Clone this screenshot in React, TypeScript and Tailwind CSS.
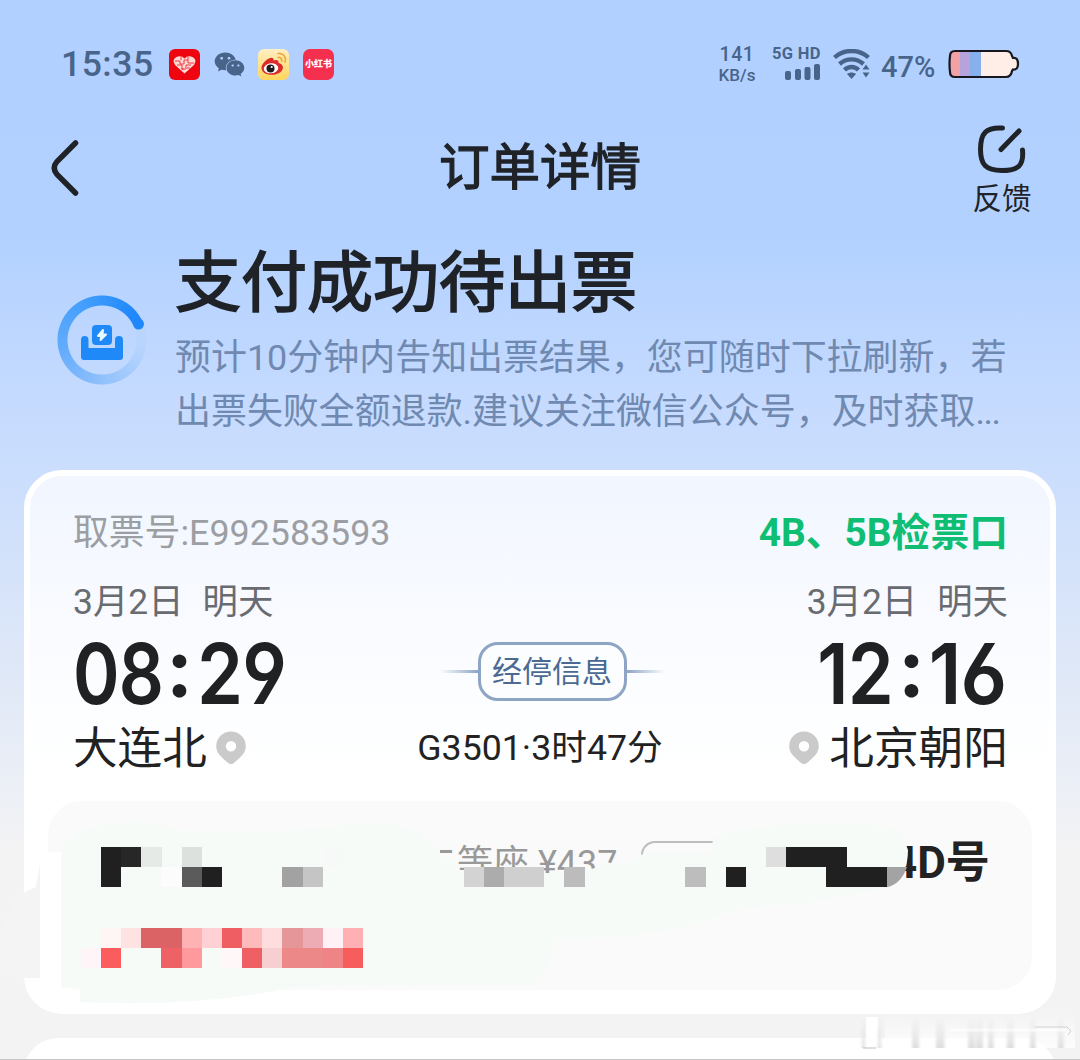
import React from "react";
import { FaWeixin } from "react-icons/fa";

const CJK = "font-['Roboto','Noto_Sans_CJK_SC',sans-serif]";

function StatusBar() {
  return (
    <div className="flex h-[110px] shrink-0 items-start text-[#49648a]">
      <div className="ml-[61px] mt-[44px] h-10 w-[108px] text-[35.5px] font-medium leading-10 tracking-[0.5px]">15:35</div>
      <svg className="mt-[49px]" width="31" height="31" viewBox="0 0 31 31">
        <rect width="31" height="31" rx="6" fill="#ee0510" />
        <path d="M15.5 24.5 L6 16 Q2.500 10.500 7.500 8 Q12 6 15.500 9.500 Q19 6 23.500 8 Q28.500 10.500 25 16 Z" fill="#ffd9d7" />
        <path d="M6 12h5v3h4v-4h4v3h6M8 16h5v4h4v-4h5M12 8v3M19 8v3M12 20h3M18 19h3" stroke="#ee3a3e" strokeWidth="1" fill="none" />
      </svg>
      <FaWeixin className="ml-[14px] mt-[49px] h-[31px] w-[31px]" />
      <svg className="ml-[13px] mt-[49px]" width="31" height="31" viewBox="0 0 31 31">
        <defs>
          <linearGradient id="wb" x1="0" y1="0" x2="0" y2="1">
            <stop offset="0" stopColor="#fff0c4" />
            <stop offset="1" stopColor="#ffd55c" />
          </linearGradient>
        </defs>
        <rect width="31" height="31" rx="6" fill="url(#wb)" />
        <path d="M11 9.500c3-1.500 5-.5 4.500 2 3-1.200 5.500-.6 5 2.300 3 .9 5 3 4.300 5.700-1 4-6 6.300-11 6.300C8 25.800 3.500 23 3.500 19c0-3.500 3.500-7.500 7.500-9.500z" fill="#dd2a28" />
        <ellipse cx="13" cy="19.300" rx="7.300" ry="5" fill="#fff" transform="rotate(-7 13 19.300)" />
        <circle cx="12.500" cy="19.500" r="4" fill="#1d1a1c" />
        <circle cx="13.700" cy="18" r="1.100" fill="#fff" />
        <path d="M20 4.500c5-.8 8.500 3.500 7 8.500M20 8.500c2.500-.4 4.300 1.500 3.700 4" stroke="#f2a83d" strokeWidth="1.700" fill="none" strokeLinecap="round" />
      </svg>
      <div className={`ml-[14px] mt-[49px] flex h-[31px] w-[31px] items-center justify-center whitespace-nowrap rounded-[7px] bg-[#f5304f] text-[9px] font-black text-white ${CJK}`}>小红书</div>
      <div className="ml-[382px] mt-[44px] w-[42px] text-center font-medium">
        <div className="text-[19.500px] leading-[22px] tracking-[0.6px]">141</div>
        <div className="text-[17px] leading-[18px]">KB/s</div>
      </div>
      <div className="ml-[14px] mt-[45px] w-[52px]">
        <div className="whitespace-nowrap text-[16.500px] font-bold leading-[18px] tracking-[0.3px]">5G HD</div>
        <svg className="ml-[13px]" width="36" height="18" viewBox="0 0 36 18" fill="currentColor">
          <rect x="0" y="8" width="6" height="9" rx="2" />
          <rect x="10" y="6" width="6" height="11" rx="2" />
          <rect x="19.500" y="4" width="6" height="13" rx="2" />
          <rect x="29" y="1" width="6" height="16" rx="2" />
        </svg>
      </div>
      <svg className="ml-[9px] mt-[49px]" width="38" height="30" viewBox="0 0 38 30" fill="none" stroke="currentColor" strokeWidth="4.400">
        <path d="M1.500 8.500C11-.2 26-.2 35.500 8.500" />
        <path d="M6.500 15c7-6.200 17-6.200 24 0" />
        <path d="M11.500 21c4-4 10-4 14 0" />
        <path d="M14 25c2.700-2 6.300-2 9 0l-4.500 5z" fill="currentColor" stroke="none" />
        <path d="M33 15.500l3.500 5h-7zM33 28.500l3.500-5h-7z" fill="currentColor" stroke="none" />
      </svg>
      <div className="ml-[10px] mt-[50px] w-[67px] text-[29px] font-medium leading-[34px]">47%</div>
      <svg className="mt-[49px]" width="73" height="30" viewBox="0 0 73 30">
        <path d="M7 2H58Q63 2 64 7Q70 7 70 14.500Q70 22 64 21.500Q63 28 58 28H7Q2 28 2 23Q1 15 2 7Q2 2 7 2Z" fill="#ffeee8" />
        <path d="M7 2H12V28H7Q2 28 2 23Q1 15 2 7Q2 2 7 2Z" fill="#f0a2a6" />
        <rect x="12" y="2" width="10" height="26" fill="#b7a3dc" />
        <rect x="22" y="2" width="11" height="26" fill="#88b1ec" />
        <path d="M7 2H58Q63 2 64 7L65 9Q70 8 70 15Q70 21 65 20.500L64 22Q63 28 58 28H7Q2 28 2 23Q1 15 2 7Q2 2 7 2Z" fill="none" stroke="#17171d" strokeWidth="2.200" />
      </svg>
    </div>
  );
}

function NavBar() {
  return (
    <div className="flex h-[130px] shrink-0 justify-between text-[#1f2328]">
      <svg className="ml-[48px] mt-[28px]" width="36" height="62" viewBox="0 0 36 62" fill="none" stroke="#1f2328" strokeWidth="5.500" strokeLinecap="round">
        <path d="M27.500 5L9 23.500Q3.500 30 9 36.500L27.500 55" />
      </svg>
      <div className="ml-[24px] mt-[26px] text-[50.500px] leading-[64px] [-webkit-text-stroke:1.3px_#1f2328]">订单详情</div>
      <div className="mr-[48px] mt-[13px] flex w-[60px] flex-col items-center">
        <svg width="52" height="52" viewBox="0 0 52 52" fill="none" stroke="#1f2328" strokeWidth="5" strokeLinecap="round">
          <path d="M26.500 5C10 4 4.500 10 4.500 26.500C4.500 42 10 47.500 26 47.500C42 47.500 48 43 46.500 27M25 26.500L43 8" />
        </svg>
        <div className="mt-[4px] text-[29.500px] leading-[40px]">反馈</div>
      </div>
    </div>
  );
}

function OrderStatus() {
  return (
    <div className="flex h-[230px] shrink-0">
      <div className="ml-[56px] mt-[54px] w-[119px]">
        <div className="relative h-[92px] w-[92px]">
          <div className="absolute inset-0 rounded-full bg-[conic-gradient(from_65deg,#bcd7fd_0deg,#b4d3fd_45deg,#93c2fc_110deg,#64acfc_190deg,#47a0fc_260deg,#2088fb_345deg,#2088fb_360deg)] [mask-image:radial-gradient(circle,transparent_34px,black_35px,black_44px,transparent_45px)]" />
          <svg className="absolute inset-0" width="92" height="92" viewBox="0 0 92 92">
            <circle cx="82.500" cy="30" r="5.500" fill="#2088fb" />
            <path d="M28.500 42Q32.500 42 32.500 46V54H59V46Q59 42 63 42Q67 42 67 46V63Q67 66 64 66H28Q25 66 25 63V46Q25 42 28.500 42Z" fill="#2089f8" />
            <rect x="36" y="31" width="20" height="20" rx="4" fill="#2089f8" />
            <path d="M47 36L42 42H45.500L44.500 46L50 40.500H46.500Z" fill="#e8fbff" stroke="#e8fbff" strokeWidth="2" strokeLinejoin="round" />
          </svg>
        </div>
      </div>
      <div className="w-[880px] whitespace-nowrap">
        <div className="mt-[4px] h-[87px] text-[66px] leading-[80px] text-[#1f2328] [-webkit-text-stroke:1.8px_#1f2328]">支付成功待出票</div>
        <div className="text-[35.960px] leading-[54px] text-[#7089b0]">
          <div>预计10分钟内告知出票结果，您可随时下拉刷新，若</div>
          <div>出票失败全额退款.建议关注微信公众号，及时获取<span className="tracking-[-1.500px]">...</span></div>
        </div>
      </div>
    </div>
  );
}

function Pin() {
  return (
    <svg width="30" height="34" viewBox="0 0 30 34">
      <path fillRule="evenodd" d="M15 .5A14.800 14.800 0 0 0 .2 15.300C.2 20 2.500 23.500 6 26.500L11.500 31.500Q15 34.500 18.500 31.500L24 26.500C27.500 23.500 29.800 20 29.800 15.300A14.800 14.800 0 0 0 15 .5ZM15 10a5.200 5.200 0 1 1 0 10.400A5.200 5.200 0 0 1 15 10Z" fill="#cacaca" />
    </svg>
  );
}

function Clock({ h, m, end = false }: { h: string; m: string; end?: boolean }) {
  return (
    <div className="flex h-[86px] items-center font-['Inter'] text-[84px] font-semibold leading-[88px] tracking-[-1px] text-[#202122] [font-feature-settings:'ss01','cv02','cv03','cv04']">
      <span className={end ? "flex w-[76px] justify-end" : "w-[90px]"}>
        <span className={end ? "inline-block origin-right scale-x-[0.88]" : "inline-block origin-left scale-x-[0.84]"}>{h}</span>
      </span>
      <span className={end ? "flex w-[34px] justify-center pb-[19px] pl-[2px] font-['Lato'] font-black" : "flex w-[34px] justify-center pb-[19px] pr-[2px] font-['Lato'] font-black"}>:</span>
      <span className={end ? "flex w-[81px] justify-end pr-[2px]" : "w-[90px]"}>
        <span className={end ? "inline-block origin-right scale-x-[0.92]" : "inline-block origin-left scale-x-[0.88]"}>{m}</span>
      </span>
    </div>
  );
}

type Cell = [number, number, string];
const DARK_CELLS: Cell[] = [
  [0, 0, "#1f201f"], [1, 0, "#272727"], [2, 0, "#e5eae6"], [4, 0, "#dde1dd"], [11, 0, "#f7f8f8"],
  [0, 1, "#1f201f"], [3, 1, "#fcfcfd"], [4, 1, "#5b5b5b"], [5, 1, "#1f201f"], [9, 1, "#a2a2a2"], [10, 1, "#c5c5c5"],
  [18, 1, "#d3d3d3"], [19, 1, "#acacac"], [20, 1, "#cecfce"], [21, 1, "#cecfce"], [23, 1, "#bcbcbc"], [29, 1, "#bdbdbd"], [31, 1, "#1f201f"],
  [33, 0, "#dedede"], [34, 0, "#1f201f"], [35, 0, "#1f201f"], [36, 0, "#1f201f"], [36, 1, "#1f201f"], [37, 1, "#1f201f"], [38, 1, "#1f201f"],
];
const RED_CELLS: Cell[] = [
  [0, 4, "#fff5f5"], [1, 4, "#ffe2e2"], [2, 4, "#dc6365"], [3, 4, "#dc6365"], [4, 4, "#ffb2b4"], [5, 4, "#ffd0d4"], [6, 4, "#ee5e62"],
  [7, 4, "#ffbabb"], [8, 4, "#ffdddf"], [9, 4, "#e49698"], [10, 4, "#edabb4"], [11, 4, "#fff1f5"], [12, 4, "#ffb0b4"],
  [-1, 5, "#fff4f7"], [0, 5, "#fa5d5e"], [3, 5, "#ee6265"], [4, 5, "#ff999c"], [6, 5, "#fff7f8"], [7, 5, "#ee6063"], [8, 5, "#f8cfd0"],
  [9, 5, "#ed8888"], [10, 5, "#ed8888"], [11, 5, "#ee8485"], [12, 5, "#f85d5d"],
];

function Redaction() {
  return (
    <svg className="absolute -left-[48px] top-0" width="1080" height="213" viewBox="0 801 1080 213">
      <path d="M41 852H62V990H41Z" fill="#fff" />
      <path d="M0 960Q-2 900 36 887L40 864V978H20Q4 975 0 960Z" fill="#f4f4f4" />
      <path d="M61 988V846L80 832Q130 812 180 830Q280 835 350 824Q420 818 434 848H440V858H456L458 871L485 873L532 873L578 873L598 867L606 862L622 865L645 853L712 853L713 836Q800 815 900 828L908 850Q908 876 890 888L800 904Q740 905 690 927Q620 940 555 938Q548 980 530 985L300 986Q200 1008 80 1002V988Z" fill="#f7fbf8" />
      <g shapeRendering="crispEdges">
        {[...DARK_CELLS, ...RED_CELLS].map(([c, r, fill], i) => (
          <rect key={i} x={101 + c * 20.15} y={847 + r * 20.15} width="20.2" height="20.2" fill={fill} />
        ))}
      </g>
      <path d="M887 867H907Q901 884 887 887.300Z" fill="#a4a3a4" />
    </svg>
  );
}

function Seat() {
  return (
    <div className="relative mx-[18px] h-[189px] w-[984px] rounded-[34px] bg-[#fafafa]">
      <div className="flex whitespace-nowrap pt-[35px]">
        <div className="ml-[373px] w-[220px] pt-[8px] text-[36px] leading-[40px] text-[#999]">二等座 ¥437</div>
        <div className="mt-[5px] h-[30px] w-[90px] rounded-[14px] border-[2px] border-b-0 border-r-0 border-[#bdbdbd]" />
        <div className="ml-[161px] text-[44px] font-bold leading-[54px] text-[#222]">4D号</div>
      </div>
      <Redaction />
    </div>
  );
}

function Ticket() {
  return (
    <div className="mx-6 h-[544px] w-[1032px] shrink-0 rounded-[38px] border-[6px] border-white bg-[linear-gradient(180deg,#f1f6ff_0px,#f8faff_130px,#fdfeff_240px,#ffffff_320px)]">
      <div className="flex h-[325px] pl-[43px] pr-[42px] pt-[30px] text-[36px] text-[#222]">
        <div className="w-[340px] whitespace-nowrap">
          <div className="h-[69px] text-[35.800px] leading-[54px] text-[#9b9ea3]">取票号:E992583593</div>
          <div className="h-[56px] text-[35.400px] leading-[54px] text-[#686b70]">3月2日<span className="ml-[19px]">明天</span></div>
          <Clock h="08" m="29" />
          <div className="flex h-[64px] items-center text-[44.600px] leading-[60px]">大连北<span className="-mt-[2px] ml-[9px]"><Pin /></span></div>
        </div>
        <div className="flex w-[254px] flex-col items-center whitespace-nowrap">
          <div className="ml-[24px] mt-[136px] flex h-[59px] items-center">
            <span className="h-[3px] w-[38px] bg-gradient-to-r from-transparent to-[#8ea5c6]" />
            <span className="flex h-[59px] w-[149px] items-center justify-center rounded-[20px] border-[3px] border-[#8da4c4] bg-[#fbfdff] text-[30px] text-[#4c6992]">经停信息</span>
            <span className="h-[3px] w-[38px] bg-gradient-to-l from-transparent to-[#8ea5c6]" />
          </div>
          <div className="mt-[20px] text-[35.700px] leading-[54px]">G3501·3时47分</div>
        </div>
        <div className="flex flex-1 flex-col items-end whitespace-nowrap">
          <div className="h-[69px] text-[38.800px] font-bold leading-[54px] text-[#0fbd73]">4B、5B检票口</div>
          <div className="h-[56px] text-[35.400px] leading-[54px] text-[#686b70]">3月2日<span className="ml-[20px]">明天</span></div>
          <Clock h="12" m="16" end />
          <div className="flex h-[64px] items-center text-[44.700px] leading-[60px]"><span className="-mt-[2px] mr-[10px]"><Pin /></span>北京朝阳</div>
        </div>
      </div>
      <Seat />
    </div>
  );
}

const STREAKS = [
  [864, 20], [880, 20], [912, 10], [936, 12], [968, 10], [976, 10], [988, 8], [1007, 10], [1030, 8], [1058, 8],
];

function Watermark() {
  return (
    <svg className="absolute bottom-[8px] right-0" width="230" height="42" viewBox="850 1010 230 42">
      <defs>
        <linearGradient id="fade" x1="0" y1="0" x2="0" y2="1">
          <stop offset="0" stopColor="#e4e4e4" stopOpacity="0" />
          <stop offset="1" stopColor="#dcdcdc" />
        </linearGradient>
        <linearGradient id="haze" x1="0" y1="0" x2="0" y2="1">
          <stop offset="0" stopColor="#fff" stopOpacity="0" />
          <stop offset="1" stopColor="#fff" stopOpacity="0.8" />
        </linearGradient>
        <filter id="soft"><feGaussianBlur stdDeviation="1.600 0.3" /></filter>
      </defs>
      <rect x="885" y="1012" width="190" height="36" fill="url(#haze)" />
      <rect x="866" y="1017" width="12" height="30" fill="#fff" />
      <g filter="url(#soft)">
        {STREAKS.map(([x, w], i) => (
          <rect key={i} x={x - (w > 15 ? 2 : 0)} y="1016" width={w > 15 ? 3 : w * 0.7} height="32" fill="url(#fade)" />
        ))}
      </g>
      <path d="M950 1030H1066" stroke="#fff" strokeWidth="3" strokeOpacity="0.6" fill="none" />
      <path d="M1035 1027H1067L1071 1031L1068 1035" stroke="#d2d2d2" strokeWidth="1" fill="none" />
      <path d="M863 1048H876" stroke="#c8c8c8" strokeWidth="1.200" />
    </svg>
  );
}

export default function App() {
  return (
    <div className={`relative flex h-[1060px] w-[1080px] flex-col overflow-hidden bg-[linear-gradient(180deg,#b1d0ff_0px,#b2d1ff_235px,#c4daff_390px,#cddffc_500px,#dde7f8_650px,#edf0f6_800px,#f3f3f4_850px,#f3f3f3_1060px)] ${CJK}`}>
      <StatusBar />
      <NavBar />
      <OrderStatus />
      <Ticket />
      <div className="mx-6 mt-6 h-[60px] shrink-0 rounded-t-[34px] bg-white" />
      <Watermark />
      <div className="absolute bottom-0 left-0 h-px w-full bg-[#c6c6c6]" />
    </div>
  );
}
